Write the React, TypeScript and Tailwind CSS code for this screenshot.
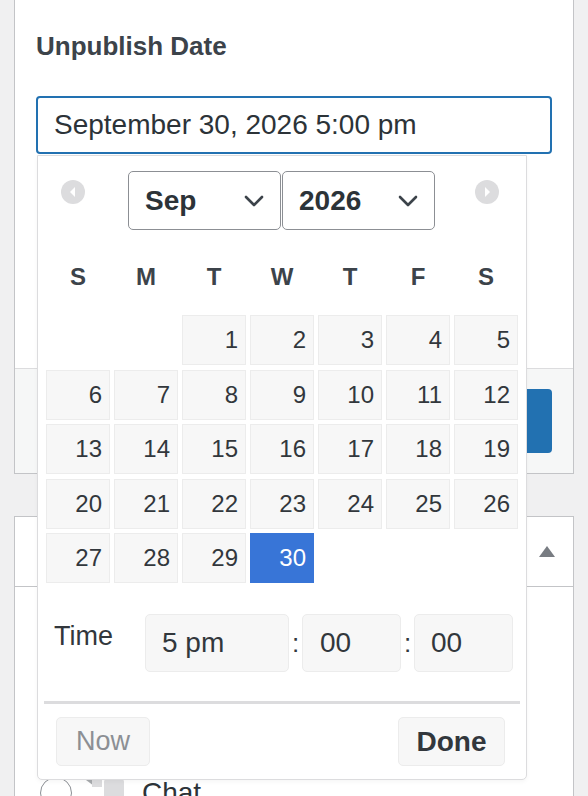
import React from 'react';

const weekDays = ['S', 'M', 'T', 'W', 'T', 'F', 'S'];

// September 2026 starts on a Tuesday
const days: (number | null)[] = [null, null, ...Array.from({ length: 30 }, (_, i) => i + 1)];

function Chevron() {
    return (
        <svg width="20" height="12" viewBox="0 0 20 12" fill="none">
            <path d="M2 2l8 8 8-8" stroke="#3c434a" strokeWidth="2.6" strokeLinecap="round" strokeLinejoin="round" />
        </svg>
    );
}

function NavCircle({ dir }: { dir: 'prev' | 'next' }) {
    return (
        <div className="mt-[9px] flex h-[24px] w-[24px] items-center justify-center rounded-full bg-[#dcdcde]">
            <svg width="8" height="10" viewBox="0 0 8 10">
                {dir === 'prev' ? <polygon points="6,0 6,10 1,5" fill="#fff" /> : <polygon points="2,0 2,10 7,5" fill="#fff" />}
            </svg>
        </div>
    );
}

export default function App() {
    return (
        <div className="relative h-[796px] w-[588px] overflow-hidden bg-[#f0f0f1] font-['Liberation_Sans',Arial,sans-serif] text-[#3c434a]">
            {/* first box */}
            <div className="ml-[14px] w-[560px] border-x border-b border-[#c3c4c7] bg-white">
                <div className="px-[21px] pt-[31px]">
                    <div className="text-[26px] font-bold leading-[30px] text-[#3c434a]">Unpublish Date</div>
                    <div className="mt-[35px] flex h-[58px] items-center rounded-[4px] border-2 border-[#2271b1] pl-[16px] text-[28px] text-[#2c3338]">
                        September 30, 2026 5:00 pm
                    </div>
                </div>
                <div className="h-[214px]" />
                <div className="flex h-[105px] justify-end border-t border-[#dcdcde] bg-[#f6f7f7] pr-[21px] pt-[20px]">
                    <div className="h-[64px] w-[120px] rounded-[4px] bg-[#2271b1]" />
                </div>
            </div>

            {/* second box */}
            <div className="ml-[14px] mt-[42px] h-[300px] w-[560px] border border-[#c3c4c7] bg-white">
                <div className="flex h-[70px] items-center justify-end border-b border-[#c3c4c7] pr-[18px]">
                    <svg width="16" height="11" viewBox="0 0 16 11">
                        <polygon points="8,0 16,11 0,11" fill="#787c82" />
                    </svg>
                </div>
                <div className="mt-[190px] flex items-start pl-[25px]">
                    <div className="h-[32px] w-[32px] rounded-full border-[1.5px] border-[#8c8f94] bg-white" />
                    <svg className="ml-[14px] mt-[1px]" width="40" height="36" viewBox="0 0 40 36">
                        <path d="M0 2h8v6z" fill="#a7aaad" />
                        <rect x="6" y="1" width="10" height="8" fill="#dcdcde" />
                        <rect x="18" y="1" width="20" height="30" rx="3" fill="#dcdcde" />
                    </svg>
                    <div className="ml-[16px] text-[28px] leading-[32px] text-[#2c3338]">Chat</div>
                </div>
            </div>

            {/* date picker popup */}
            <div className="absolute left-[37px] top-[155px] w-[490px] rounded-b-[5px] border border-[#dcdcde] bg-white pb-[13px] pt-[15px] shadow-[0_2px_4px_rgba(0,0,0,0.04)]">
                <div className="flex items-start pl-[23px]">
                    <NavCircle dir="prev" />
                    <div className="ml-[43px] flex gap-[1px]">
                        <div className="flex h-[59px] w-[153px] items-center justify-between rounded-[5px] border-[1.5px] border-[#8c8f94] pl-[16px] pr-[16px] text-[28px] font-bold text-[#2c3338]">
                            Sep
                            <Chevron />
                        </div>
                        <div className="flex h-[59px] w-[153px] items-center justify-between rounded-[5px] border-[1.5px] border-[#8c8f94] pl-[16px] pr-[16px] text-[28px] font-bold text-[#2c3338]">
                            2026
                            <Chevron />
                        </div>
                    </div>
                    <div className="ml-[40px]">
                        <NavCircle dir="next" />
                    </div>
                </div>

                <div className="mt-[27px] grid h-[40px] grid-cols-[repeat(7,64px)] items-center gap-x-[4px] px-[8px] text-center text-[24px] font-bold text-[#3c434a]">
                    {weekDays.map((d, i) => (
                        <div key={i}>{d}</div>
                    ))}
                </div>

                <div className="mt-[18px] grid grid-cols-[repeat(7,64px)] gap-x-[4px] gap-y-[4.5px] px-[8px]">
                    {days.map((d, i) =>
                        d === null ? (
                            <div key={i} className="h-[50px]" />
                        ) : d === 30 ? (
                            <div key={i} className="flex h-[50px] items-center justify-end bg-[#3875d7] pr-[8px] text-[24px] text-white">
                                {d}
                            </div>
                        ) : (
                            <div key={i} className="flex h-[50px] items-center justify-end border border-[#ececec] bg-[#f7f7f7] pr-[7px] text-[24px] text-[#32373c]">
                                {d}
                            </div>
                        )
                    )}
                </div>

                <div className="mt-[31px] flex items-start pl-[16px]">
                    <div className="mt-[7px] w-[91px] text-[27px] leading-[30px] text-[#32373c]">Time</div>
                    <div className="flex h-[58px] w-[144px] items-center rounded-[5px] border border-[#ececec] bg-[#f7f7f7] pl-[16px] text-[28px] text-[#32373c]">5 pm</div>
                    <div className="flex h-[58px] w-[13px] items-center justify-center text-[26px] text-[#32373c]">:</div>
                    <div className="flex h-[58px] w-[99px] items-center rounded-[5px] border border-[#ececec] bg-[#f7f7f7] pl-[17px] text-[28px] text-[#32373c]">00</div>
                    <div className="flex h-[58px] w-[13px] items-center justify-center text-[26px] text-[#32373c]">:</div>
                    <div className="flex h-[58px] w-[99px] items-center rounded-[5px] border border-[#ececec] bg-[#f7f7f7] pl-[16px] text-[28px] text-[#32373c]">00</div>
                </div>

                <div className="mx-[6px] mt-[29px] h-[3px] bg-[#dcdcde]" />

                <div className="mt-[13px] flex justify-between pl-[18px] pr-[21px]">
                    <div className="flex h-[49px] w-[94px] items-center justify-center rounded-[5px] border border-[#ececec] bg-[#f7f7f7] text-[27px] text-[#8c8f94]">Now</div>
                    <div className="flex h-[49px] w-[107px] items-center justify-center rounded-[5px] border border-[#ececec] bg-[#f7f7f7] text-[28px] font-bold text-[#32373c]">Done</div>
                </div>
            </div>
        </div>
    );
}
